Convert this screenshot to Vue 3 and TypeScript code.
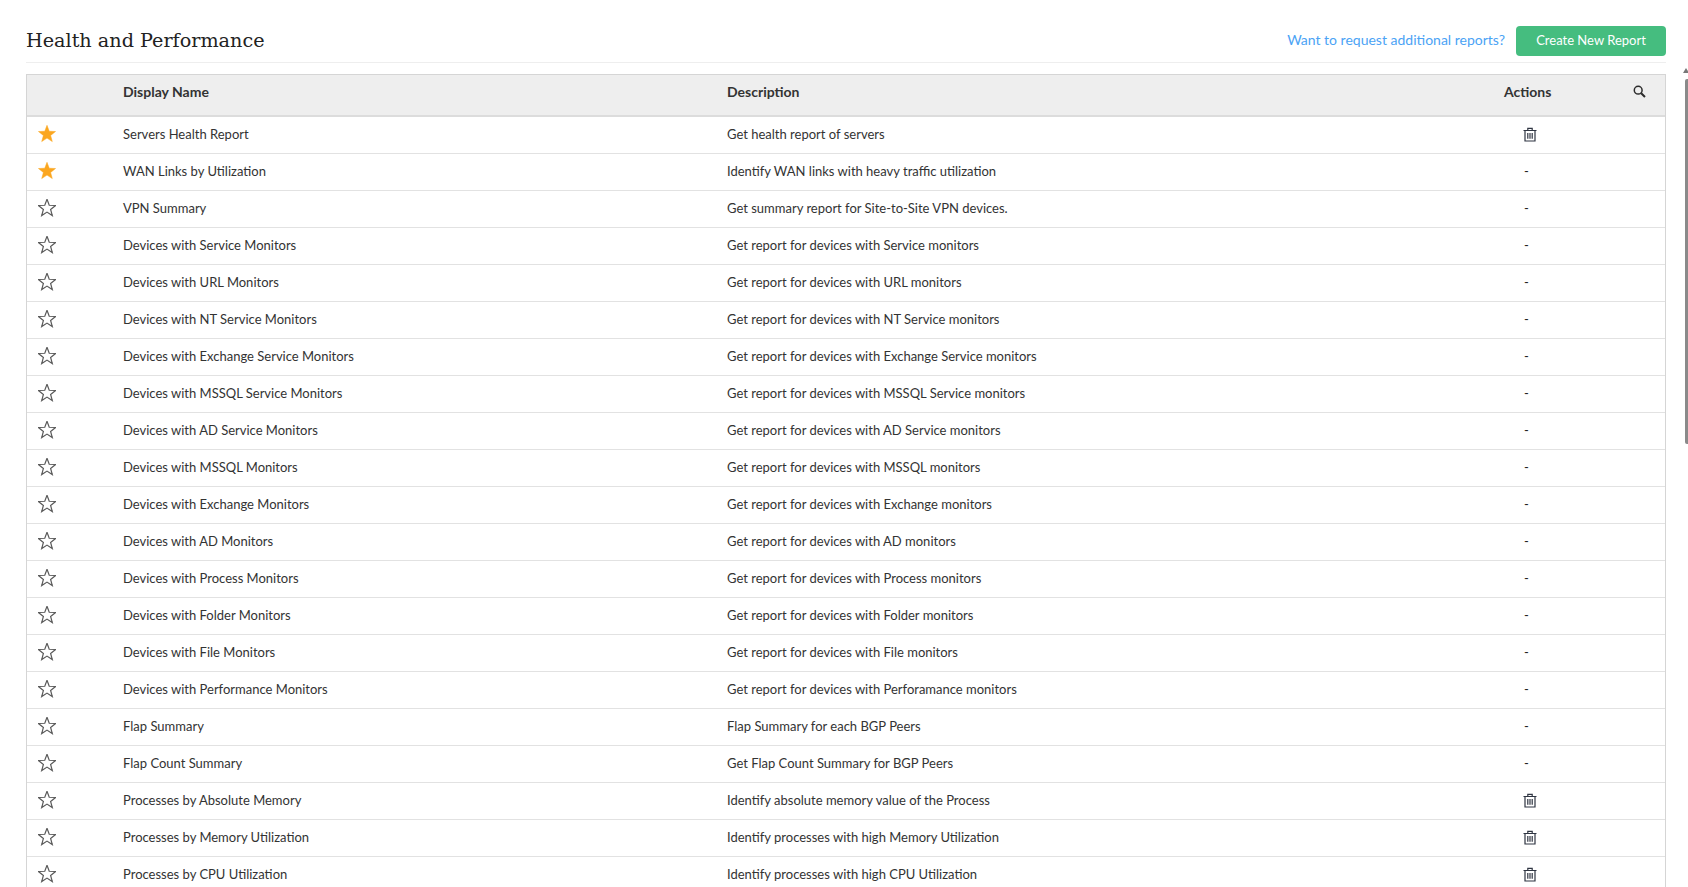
<script setup lang="ts">
  interface ReportRow {
    name: string;
    description: string;
    favourite?: boolean;
    deletable?: boolean;
  }

  const rows: ReportRow[] = [
    { name: "Servers Health Report", description: "Get health report of servers", favourite: true, deletable: true },
    { name: "WAN Links by Utilization", description: "Identify WAN links with heavy traffic utilization", favourite: true },
    { name: "VPN Summary", description: "Get summary report for Site-to-Site VPN devices." },
    { name: "Devices with Service Monitors", description: "Get report for devices with Service monitors" },
    { name: "Devices with URL Monitors", description: "Get report for devices with URL monitors" },
    { name: "Devices with NT Service Monitors", description: "Get report for devices with NT Service monitors" },
    { name: "Devices with Exchange Service Monitors", description: "Get report for devices with Exchange Service monitors" },
    { name: "Devices with MSSQL Service Monitors", description: "Get report for devices with MSSQL Service monitors" },
    { name: "Devices with AD Service Monitors", description: "Get report for devices with AD Service monitors" },
    { name: "Devices with MSSQL Monitors", description: "Get report for devices with MSSQL monitors" },
    { name: "Devices with Exchange Monitors", description: "Get report for devices with Exchange monitors" },
    { name: "Devices with AD Monitors", description: "Get report for devices with AD monitors" },
    { name: "Devices with Process Monitors", description: "Get report for devices with Process monitors" },
    { name: "Devices with Folder Monitors", description: "Get report for devices with Folder monitors" },
    { name: "Devices with File Monitors", description: "Get report for devices with File monitors" },
    { name: "Devices with Performance Monitors", description: "Get report for devices with Perforamance monitors" },
    { name: "Flap Summary", description: "Flap Summary for each BGP Peers" },
    { name: "Flap Count Summary", description: "Get Flap Count Summary for BGP Peers" },
    { name: "Processes by Absolute Memory", description: "Identify absolute memory value of the Process", deletable: true },
    { name: "Processes by Memory Utilization", description: "Identify processes with high Memory Utilization", deletable: true },
    { name: "Processes by CPU Utilization", description: "Identify processes with high CPU Utilization", deletable: true },
  ];

  const starPath =
    "M9 .8l2.23 5.93 6.33.29-4.95 3.95 1.68 6.11L9 13.6l-5.29 3.48 1.68-6.11L.44 7.02l6.33-.29z";
</script>

<template>
  <div class="page">
    <div class="content">
      <header class="top">
        <h1 class="title">Health and Performance</h1>
        <div class="top-right">
          <a class="request-link">Want to request additional reports?</a>
          <button class="create-btn">Create New Report</button>
        </div>
      </header>

      <div class="table">
        <div class="row head">
          <div class="cell-star"></div>
          <div class="cell-name">Display Name</div>
          <div class="cell-desc">Description</div>
          <div class="cell-actions">Actions</div>
          <div class="cell-search">
            <svg width="13" height="13" viewBox="0 0 13 13" fill="none" stroke="#2b2b2b">
              <circle cx="5.2" cy="5.2" r="3.9" stroke-width="1.5" />
              <path d="M8.2 8.2l3.8 3.8" stroke-width="2" />
            </svg>
          </div>
        </div>

        <div v-for="row in rows" :key="row.name" class="row">
          <div class="cell-star">
            <svg width="18" height="18" viewBox="0 0.5 18 18">
              <path v-if="row.favourite" :d="starPath" fill="#fba61f" stroke="#fba61f" stroke-width="0.5" />
              <path v-else :d="starPath" fill="none" stroke="#5a5a5a" stroke-width="1.2" />
            </svg>
          </div>
          <div class="cell-name">{{ row.name }}</div>
          <div class="cell-desc">{{ row.description }}</div>
          <div class="cell-actions">
            <svg v-if="row.deletable" class="trash" width="14" height="15" viewBox="0 0 14 15" fill="none" stroke="#2f3542">
              <path d="M.5 3.5h13M2 3.5v10.5h10V3.5M4.8 3.3V1.4h4.4v1.9" stroke-width="1.2" />
              <path d="M4.8 6v5.8M7 6v5.8M9.2 6v5.8" stroke-width="1.2" />
            </svg>
            <span v-else class="dash">-</span>
          </div>
          <div class="cell-search"></div>
        </div>
      </div>
    </div>

    <div class="scrollbar">
      <div class="scroll-arrow"></div>
      <div class="scroll-thumb"></div>
    </div>
  </div>
</template>

<style>
  html,
  body {
    margin: 0;
    height: 887px;
    overflow: hidden;
    background: #fff;
  }
</style>

<style scoped>
  .page {
    display: flex;
    height: 887px;
    overflow: hidden;
    font-family: Lato, "Liberation Sans", sans-serif;
    font-size: 13px;
    color: #333;
  }

  .content {
    width: 1640px;
    margin-left: 26px;
    flex: none;
  }

  .top {
    display: flex;
    align-items: center;
    justify-content: space-between;
    height: 63px;
    box-sizing: border-box;
    padding-top: 20px;
    border-bottom: 1px solid #eee;
    margin-bottom: 11px;
  }

  .title {
    margin: 0 0 2px;
    font-family: "DejaVu Serif", serif;
    font-size: 19.2px;
    font-weight: 400;
    color: #222;
  }

  .top-right {
    display: flex;
    align-items: center;
    gap: 11px;
  }

  .request-link {
    margin-bottom: 3px;
    font-size: 14px;
    color: #4ba3f5;
  }

  .create-btn {
    width: 150px;
    height: 30px;
    padding: 0 0 2px;
    border: none;
    border-radius: 4px;
    background: #45bd7f;
    color: #fff;
    font-family: inherit;
    font-size: 13px;
  }

  .table {
    border: 1px solid #d5d5d5;
    border-bottom: none;
  }

  .row {
    display: flex;
    align-items: center;
    height: 37px;
    box-sizing: border-box;
    padding-bottom: 2px;
    border-bottom: 1px solid #e2e2e2;
  }

  .head {
    height: 42px;
    background: #eee;
    border-bottom: 2px solid #dcdcdc;
    font-size: 14px;
    font-weight: 700;
    color: #333;
    padding-bottom: 7px;
  }

  .cell-star {
    flex: none;
    width: 96px;
    padding-left: 11px;
    box-sizing: border-box;
    display: flex;
    align-items: center;
  }

  .cell-name {
    flex: none;
    width: 604px;
  }

  .cell-desc {
    flex: none;
    width: 777px;
  }

  .cell-actions {
    flex: none;
    width: 90px;
    display: flex;
    align-items: center;
  }

  .trash {
    margin-left: 19px;
  }

  .dash {
    margin-left: 20px;
    color: #222;
  }

  .cell-search {
    flex: 1;
    display: flex;
    align-items: center;
    justify-content: flex-end;
    padding-right: 19px;
  }

  .scrollbar {
    flex: 1;
    position: relative;
  }

  .scroll-arrow {
    position: absolute;
    top: 68px;
    right: -1px;
    width: 0;
    height: 0;
    border-left: 3px solid transparent;
    border-right: 3px solid transparent;
    border-bottom: 5px solid #777;
  }

  .scroll-thumb {
    position: absolute;
    top: 79px;
    right: 0;
    width: 3px;
    height: 365px;
    background: #8a8a8a;
    border-radius: 2px 0 0 2px;
  }
</style>
